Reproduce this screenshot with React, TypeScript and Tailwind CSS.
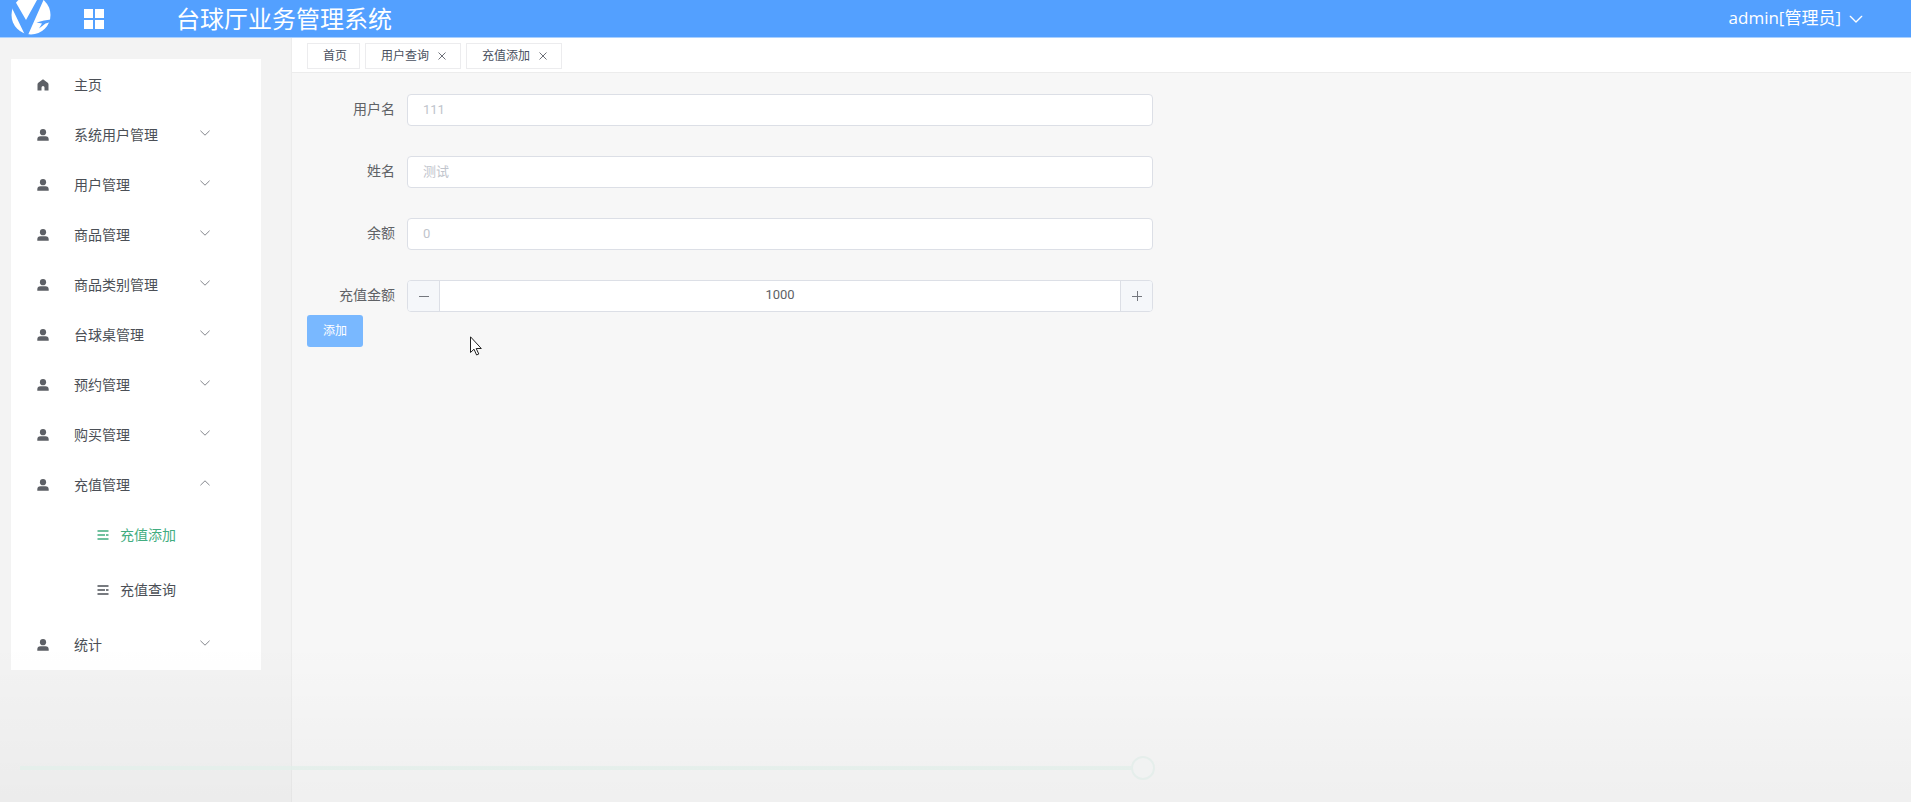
import React, { useState } from 'react';

const groupsBefore = ['系统用户管理', '用户管理', '商品管理', '商品类别管理', '台球桌管理', '预约管理', '购买管理'];

function LogoIcon() {
  return (
    <svg viewBox="0 0 40 40" className="h-10 w-10" aria-hidden="true">
      <circle cx="20" cy="20" r="19.500" fill="#fff" />
      <path d="M0 10 L4 6 L15 25 L26 5 L32.500 5 L17 40 L14 40 L1.500 14 Z" fill="#53a0ff" />
      <path d="M25.500 27.500 L33 25.500 L40 24.500 L40 27 L34.500 28.500 L28 33.500 L31 28.500 Z" fill="#53a0ff" />
    </svg>
  );
}

function GridIcon() {
  return (
    <svg viewBox="0 0 20 20" className="h-5 w-5" fill="#fff" aria-hidden="true">
      <path d="M0 0h9v9H0zM11 0h9v9h-9zM0 11h9v9H0zM11 11h9v9h-9z" />
    </svg>
  );
}

function HomeIcon() {
  return (
    <svg viewBox="0 0 12 12" className="h-3 w-3" fill="#5d6066" aria-hidden="true">
      <path d="M6 .3 1.300 3.800A2 2 0 0 0 .5 5.400V11.500H4.500V8.400a1.500 1.500 0 0 1 3 0v3.100h4V5.400a2 2 0 0 0-.8-1.600Z" />
    </svg>
  );
}

function UserIcon() {
  return (
    <svg viewBox="0 0 12 12" className="h-3 w-3" fill="#5d6066" aria-hidden="true">
      <circle cx="6" cy="3.200" r="3.100" />
      <path d="M.3 11.800v-1.300A3.200 3.200 0 0 1 3.500 7.300h5a3.200 3.200 0 0 1 3.200 3.200v1.300Z" />
    </svg>
  );
}

function ListIcon() {
  return (
    <svg viewBox="0 0 12 12" className="h-3 w-3" stroke="currentColor" strokeWidth="1.600" aria-hidden="true">
      <path d="M.5 2h11M.5 6h7.500M9 6h2.500M.5 10h11" />
    </svg>
  );
}

function Chevron({ up = false, className = 'h-3 w-3' }: { up?: boolean; className?: string }) {
  return (
    <svg viewBox="0 0 12 12" className={className} fill="none" stroke="currentColor" strokeWidth="1" strokeLinecap="round" strokeLinejoin="round" aria-hidden="true">
      <path d={up ? 'M1.700 8 6 3.800 10.300 8' : 'M1.700 4 6 8.200 10.300 4'} />
    </svg>
  );
}

function MenuGroup({ label, open = false }: { label: string; open?: boolean }) {
  return (
    <button type="button" aria-expanded={open} className="flex h-[50px] w-full items-center pl-[26px] pr-[50px] text-left">
      <UserIcon />
      <span className="ml-[25px] flex-1">{label}</span>
      <span className="pb-1 text-[#85888e]">
        <Chevron up={open} />
      </span>
    </button>
  );
}

function Tab({ label, closable = true }: { label: string; closable?: boolean }) {
  return (
    <div className="flex h-[26px] items-center border border-[#ececee] bg-white pl-[15px] pr-3 text-xs">
      <a href="#" className="text-[#495060]">{label}</a>
      {closable && (
        <button type="button" aria-label={`关闭${label}`} className="ml-[7px] flex h-3 w-3 items-center justify-center text-[#6d7078]">
          <svg viewBox="0 0 8 8" className="h-2 w-2" stroke="currentColor" strokeWidth="1" aria-hidden="true">
            <path d="M.5 .5l7 7M7.500 .5l-7 7" />
          </svg>
        </button>
      )}
    </div>
  );
}

function FormRow({ id, label, children }: { id: string; label: string; children: React.ReactNode }) {
  return (
    <div className="flex h-8 items-center">
      <label htmlFor={id} className="w-[100px] shrink-0 pb-0.5 pr-3 text-right text-sm text-[#606266]">{label}</label>
      {children}
    </div>
  );
}

function ReadonlyField({ id, label, placeholder }: { id: string; label: string; placeholder: string }) {
  return (
    <FormRow id={id} label={label}>
      <input id={id} placeholder={placeholder} readOnly className="h-8 min-w-0 flex-1 rounded border border-[#dcdfe6] bg-white px-[15px] pb-0.5 font-['Roboto','Noto_Sans_CJK_SC',sans-serif] text-[13px] outline-none placeholder:text-[#c0c4cc]" />
    </FormRow>
  );
}

export default function App() {
  const [amount, setAmount] = useState(1000);
  return (
    <div className="relative flex min-h-screen flex-col overflow-hidden bg-[#f7f7f7] font-['Liberation_Sans','Noto_Sans_CJK_SC',sans-serif] text-sm text-[#4b4f56]">
      <header className="flex h-[38px] items-center overflow-hidden border-b border-[#a9d0ff] bg-[#53a0ff] pl-[11px] pr-[47px] text-white">
        <div className="-mt-2">
          <LogoIcon />
        </div>
        <button type="button" aria-label="折叠菜单" className="ml-[33px]">
          <GridIcon />
        </button>
        <h1 className="ml-[72px] flex-1 pt-0.5 text-2xl leading-9">台球厅业务管理系统</h1>
        <button type="button" className="flex items-center gap-[7px] font-['Open_Sans','Noto_Sans_CJK_SC',sans-serif] text-[17px]">
          admin[管理员]
          <Chevron className="h-4 w-4" />
        </button>
      </header>

      <div className="flex flex-1">
        <aside className="w-[292px] shrink-0 border-r border-[#ececec] bg-[#f3f3f3] pl-[11px] pr-[30px] pt-[21px]">
          <nav className="bg-white pt-px">
            <a href="#" className="flex h-[50px] items-center pl-[26px]">
              <HomeIcon />
              <span className="ml-[25px]">主页</span>
            </a>
            {groupsBefore.map((g) => (
              <MenuGroup key={g} label={g} />
            ))}
            <MenuGroup label="充值管理" open />
            <a href="#" className="mb-[5px] flex h-[50px] items-center gap-[11px] pl-[86px] text-[#42ad80]">
              <ListIcon />
              充值添加
            </a>
            <a href="#" className="mb-[5px] flex h-[50px] items-center gap-[11px] pl-[86px]">
              <ListIcon />
              充值查询
            </a>
            <MenuGroup label="统计" />
          </nav>
        </aside>

        <main className="min-w-0 flex-1">
          <div className="flex h-[35px] items-center gap-[5px] border-b border-[#ececec] bg-white pl-[15px] pt-px">
            <Tab label="首页" closable={false} />
            <Tab label="用户查询" />
            <Tab label="充值添加" />
          </div>
          <form className="px-[15px] pt-[21px]" onSubmit={(e) => e.preventDefault()}>
            <div className="flex max-w-[846px] flex-col gap-[30px]">
              <ReadonlyField id="username" label="用户名" placeholder="111" />
              <ReadonlyField id="name" label="姓名" placeholder="测试" />
              <ReadonlyField id="balance" label="余额" placeholder="0" />
              <FormRow id="amount" label="充值金额">
                <div className="flex h-8 min-w-0 flex-1 overflow-hidden rounded border border-[#dcdfe6] bg-white">
                  <button type="button" aria-label="减少" onClick={() => setAmount(amount - 1)} className="flex w-8 items-center justify-center border-r border-[#dcdfe6] bg-[#f5f7fa]">
                    <svg viewBox="0 0 10 10" className="h-[10px] w-[10px]" stroke="#74777e" aria-hidden="true"><path d="M0 5.500h10" /></svg>
                  </button>
                  <input id="amount" value={amount} onChange={(e) => setAmount(Number(e.target.value) || 0)} className="min-w-0 flex-1 pb-0.5 text-center font-['Roboto','Noto_Sans_CJK_SC',sans-serif] text-[13px] text-[#606266] outline-none" />
                  <button type="button" aria-label="增加" onClick={() => setAmount(amount + 1)} className="flex w-8 items-center justify-center border-l border-[#dcdfe6] bg-[#f5f7fa]">
                    <svg viewBox="0 0 10 10" className="h-[10px] w-[10px]" stroke="#74777e" aria-hidden="true"><path d="M0 5.500h10M5.500 0v10" /></svg>
                  </button>
                </div>
              </FormRow>
            </div>
            <button type="submit" className="mt-[3px] h-8 rounded-[3px] bg-[#79b8ff] px-4 text-xs text-white">添加</button>
          </form>
        </main>
      </div>

      <div className="pointer-events-none absolute inset-x-0 bottom-0 h-40 bg-linear-to-b from-black/0 to-black/3" />
      <div className="pointer-events-none absolute bottom-[22px] left-5 flex w-[1135px] items-center">
        <span className="h-1 flex-1 bg-[#e2efea]/80" />
        <span className="h-6 w-6 rounded-full border-2 border-[#e5eeeb] bg-[#f1f2f2]" />
      </div>
      <svg viewBox="0 0 12 20" className="pointer-events-none absolute left-[470px] top-[336px] h-5 w-3" fill="#fff" stroke="#222" strokeWidth="1" aria-hidden="true">
        <path d="M.5 .8v15.700l3.500-3.300 2.600 5.800 2.200-1-2.600-5.500h5.100Z" />
      </svg>
    </div>
  );
}
